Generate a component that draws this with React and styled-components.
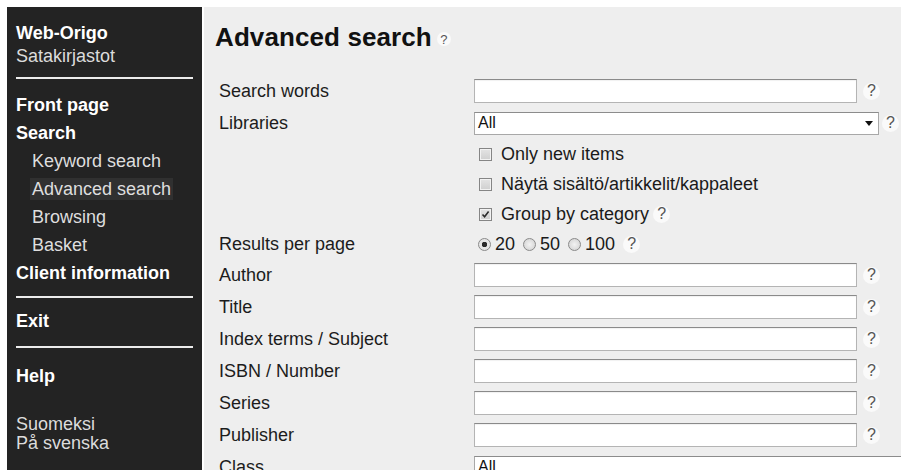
import React from "react";
import styled, { createGlobalStyle } from "styled-components";

const GlobalStyle = createGlobalStyle`
html, body {
    margin: 0;
    padding: 0;
    background: #fff;
    overflow: hidden;
}
body {
    font-family: "Liberation Sans", Arial, sans-serif;
}
`;

const navItems = [
    { label: "Front page", bold: true },
    { label: "Search", bold: true },
    { label: "Keyword search", sub: true },
    { label: "Advanced search", sub: true, active: true },
    { label: "Browsing", sub: true },
    { label: "Basket", sub: true },
    { label: "Client information", bold: true },
];

const textFields = ["Author", "Title", "Index terms / Subject", "ISBN / Number", "Series", "Publisher"];

const Help = ({ small, gap }) => <HelpMark $small={small} $gap={gap}>?</HelpMark>;

const Check = ({ checked }) => (
    <CheckBox>
        {checked && (
            <svg width="9" height="9" viewBox="0 0 9 9">
                <path d="M1.5 4.5 L3.6 6.8 L7.6 1.6" fill="none" stroke="#2a2a2a" strokeWidth="1.6" />
            </svg>
        )}
    </CheckBox>
);

const Select = ({ value, width }) => (
    <SelectBox $width={width}>
        <span>{value}</span>
        <svg width="8" height="5" viewBox="0 0 8 5">
            <path d="M0 0 H8 L4 5 Z" fill="#111" />
        </svg>
    </SelectBox>
);

const App = () => {
    return (
        <Page>
            <GlobalStyle />
            <Sidebar>
                <Brand>
                    <BrandName>Web-Origo</BrandName>
                    <BrandSub>Satakirjastot</BrandSub>
                </Brand>
                <Divider $top={9} />
                <NavList $top={12}>
                    {navItems.map((item) => (
                        <NavItem key={item.label} $bold={item.bold} $sub={item.sub}>
                            <NavLink $active={item.active}>{item.label}</NavLink>
                        </NavItem>
                    ))}
                </NavList>
                <Divider $top={9} />
                <NavList $top={9}>
                    <NavItem $bold>Exit</NavItem>
                </NavList>
                <Divider $top={11} />
                <NavList $top={14}>
                    <NavItem $bold>Help</NavItem>
                </NavList>
                <LangList>
                    <LangItem>Suomeksi</LangItem>
                    <LangItem>På svenska</LangItem>
                </LangList>
            </Sidebar>

            <Main>
                <Heading>
                    Advanced search
                    <Help small />
                </Heading>
                <Form>
                    <Row $h={32}>
                        <Label>Search words</Label>
                        <Field>
                            <TextInput type="text" />
                            <Help />
                        </Field>
                    </Row>
                    <Row $h={32}>
                        <Label>Libraries</Label>
                        <Field>
                            <Select value="All" width={405} />
                            <Help gap={3} />
                        </Field>
                    </Row>
                    <Row $h={30}>
                        <Label />
                        <Field $indent={5}>
                            <Check />
                            <OptionText>Only new items</OptionText>
                        </Field>
                    </Row>
                    <Row $h={30}>
                        <Label />
                        <Field $indent={5}>
                            <Check />
                            <OptionText>Näytä sisältö/artikkelit/kappaleet</OptionText>
                        </Field>
                    </Row>
                    <Row $h={30}>
                        <Label />
                        <Field $indent={5}>
                            <Check checked />
                            <OptionText>Group by category</OptionText>
                            <Help gap={4} />
                        </Field>
                    </Row>
                    <Row $h={30}>
                        <Label>Results per page</Label>
                        <Field $indent={4}>
                            {["20", "50", "100"].map((n, i) => (
                                <RadioOption key={n}>
                                    <Radio $on={i === 0} />
                                    {n}
                                </RadioOption>
                            ))}
                            <Help gap={0} />
                        </Field>
                    </Row>
                    {textFields.map((name) => (
                        <Row $h={32} key={name}>
                            <Label>{name}</Label>
                            <Field>
                                <TextInput type="text" />
                                <Help />
                            </Field>
                        </Row>
                    ))}
                    <Row $h={32}>
                        <Label>Class</Label>
                        <Field>
                            <Select value="All" width={470} />
                        </Field>
                    </Row>
                </Form>
            </Main>
        </Page>
    );
};

const Page = styled.div`
display: flex;
gap: 2px;
padding: 7px 0 0 7px;
height: 470px;
box-sizing: border-box;
`;

const Sidebar = styled.nav`
width: 195px;
flex-shrink: 0;
background: #232323;
padding: 15px 9px 0;
box-sizing: border-box;
color: #fff;
font-size: 18px;
`;

const Brand = styled.div`
line-height: 23px;
`;

const BrandName = styled.div`
font-weight: bold;
color: #fff;
`;

const BrandSub = styled.div`
color: #dcdcdc;
`;

const Divider = styled.div`
height: 2px;
margin-top: ${(p) => p.$top}px;
background: #ececec;
`;

const NavList = styled.ul`
list-style: none;
margin: ${(p) => p.$top}px 0 0;
padding: 0;
`;

const NavItem = styled.li`
line-height: 28px;
height: 28px;
font-weight: ${(p) => (p.$bold ? "bold" : "normal")};
color: ${(p) => (p.$bold ? "#fff" : "#dedede")};
padding-left: ${(p) => (p.$sub ? 16 : 0)}px;
white-space: nowrap;
`;

const NavLink = styled.span`
display: inline-block;
line-height: 22px;
padding: 0 2px;
margin-left: -2px;
background: ${(p) => (p.$active ? "#303030" : "transparent")};
`;

const LangList = styled.div`
margin-top: 25px;
line-height: 19px;
color: #dcdcdc;
`;

const LangItem = styled.div``;

const Main = styled.main`
flex: 1;
min-width: 0;
overflow: hidden;
background: #eeeeee;
padding: 15px 0 0 11px;
color: #1b1b1b;
`;

const Heading = styled.h1`
margin: 0;
font-size: 26px;
line-height: 30px;
font-weight: bold;
color: #111;
display: flex;
align-items: center;
white-space: nowrap;
letter-spacing: 0.1px;
`;

const HelpMark = styled.span`
display: inline-flex;
align-items: center;
justify-content: center;
flex-shrink: 0;
width: ${(p) => (p.$small ? 14 : 17)}px;
height: ${(p) => (p.$small ? 14 : 17)}px;
margin-left: ${(p) => (p.$small ? 5 : p.$gap ?? 6)}px;
margin-top: ${(p) => (p.$small ? 4 : 0)}px;
border-radius: 50%;
background: #fafafa;
color: #555;
font-size: ${(p) => (p.$small ? 13 : 16)}px;
font-weight: normal;
line-height: 1;
`;

const Form = styled.div`
margin-top: 23px;
padding-left: 4px;
`;

const Row = styled.div`
display: grid;
grid-template-columns: 255px 1fr;
align-items: center;
height: ${(p) => p.$h}px;
`;

const Label = styled.div`
font-size: 18px;
color: #1c1c1c;
white-space: nowrap;
`;

const Field = styled.div`
display: flex;
align-items: center;
padding-left: ${(p) => p.$indent || 0}px;
font-size: 18px;
white-space: nowrap;
`;

const TextInput = styled.input`
width: 383px;
height: 24px;
box-sizing: border-box;
margin: 0;
border: 1px solid #b4b4b4;
border-top-color: #8a8a8a;
background: #fff;
box-shadow: inset 0 1px 1px rgba(0, 0, 0, 0.06);
outline: none;
`;

const SelectBox = styled.div`
width: ${(p) => p.$width}px;
height: 23px;
flex-shrink: 0;
box-sizing: border-box;
display: flex;
align-items: center;
justify-content: space-between;
padding: 0 5px 0 3px;
border: 1px solid #a8a8a8;
border-top-color: #8c8c8c;
background: #fff;
font-size: 16px;
color: #111;
`;

const CheckBox = styled.span`
width: 13px;
height: 13px;
box-sizing: border-box;
display: inline-flex;
align-items: center;
justify-content: center;
border: 1px solid #858585;
background: linear-gradient(#e4e4e4, #cfcfcf);
box-shadow: inset 0 0 0 1px #f2f2f2;
margin-right: 9px;
`;

const OptionText = styled.span`
color: #1a1a1a;
`;

const RadioOption = styled.span`
display: inline-flex;
align-items: center;
margin-right: 8px;
color: #1a1a1a;
`;

const Radio = styled.span`
width: 13px;
height: 13px;
box-sizing: border-box;
border-radius: 50%;
border: 1px solid #8a8a8a;
background: ${(p) =>
    p.$on
        ? "radial-gradient(circle, #2a2a2a 0 2.5px, #e6e6e6 3px)"
        : "radial-gradient(circle, #f2f2f2, #cfcfcf)"};
margin-right: 4px;
`;

export default App;
